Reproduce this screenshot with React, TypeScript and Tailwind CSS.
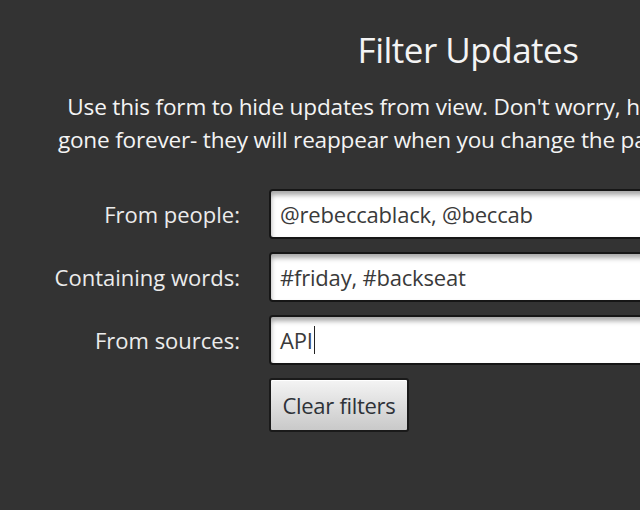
const font = { fontFamily: "'Open Sans', 'Liberation Sans', sans-serif" };

const fields = [
  { label: "From people:", value: "@rebeccablack, @beccab" },
  { label: "Containing words:", value: "#friday, #backseat" },
  { label: "From sources:", value: "API", caret: true },
];

export default function App() {
  return (
    <div
      className="w-[640px] h-[510px] overflow-hidden bg-[#333333] text-[#f4f4f4] font-medium"
      style={font}
    >
      <div className="w-[936px] pt-[28px] text-center">
        <h1 className="text-[35px] leading-[44px] tracking-[-0.5px]">Filter Updates</h1>
        <p className="mt-[18px] text-[22.6px] leading-[33px] tracking-[-0.2px]">
          Use this form to hide updates from view. Don't worry, hidden updates are not
          <br />
          gone forever- they will reappear when you change the page filter settings again.
        </p>
      </div>

      <div className="mt-[33px] grid grid-cols-[240px_500px] gap-x-[29px] gap-y-[13px] items-center">
        {fields.map((f) => (
          <div key={f.label} className="contents">
            <label className="text-right text-[22px] text-[#ececec]">
              {f.label}
            </label>
            <div className="h-[50px] rounded-[4px] border-2 border-[#161616] bg-white shadow-[inset_0_4px_5px_rgba(0,0,0,0.35)] flex items-center pl-[9px] text-[22px] tracking-[-0.2px] text-[#3a3a3a]">
              {f.value}
              {f.caret && <span className="ml-[1px] w-[1.5px] h-[28px] bg-[#222]" />}
            </div>
          </div>
        ))}
        <div />
        <div>
          <button className="h-[54px] w-[140px] rounded-[3px] border-2 border-[#1a1a1a] bg-gradient-to-b from-[#f4f4f4] to-[#c9c9c9] text-[22px] tracking-[-0.3px] text-[#2e3238] shadow-[inset_0_1px_0_#ffffff]">
            Clear filters
          </button>
        </div>
      </div>
    </div>
  );
}
